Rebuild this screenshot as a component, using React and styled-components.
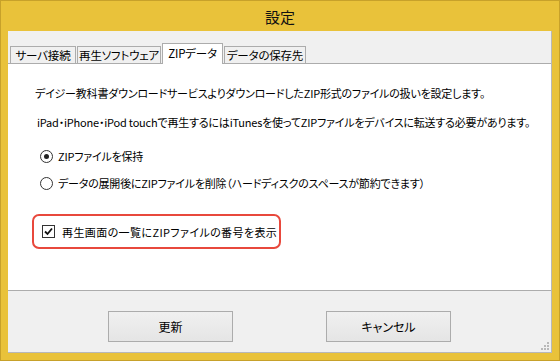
import styled, { createGlobalStyle } from "styled-components";

const GlobalStyle = createGlobalStyle`
  html, body {
    margin: 0;
    padding: 0;
    background: #ffffff;
  }
  body {
    font-family: "Noto Sans CJK JP", "Noto Sans", sans-serif;
    font-size: 11px;
    letter-spacing: -0.2px;
    color: #000000;
    font-feature-settings: "palt";
  }
`;

const tabs = [
  { label: "サーバ接続", width: 66 },
  { label: "再生ソフトウェア", width: 84 },
  { label: "ZIPデータ", width: 61, active: true },
  { label: "データの保存先", width: 82 },
];

export default function App() {
  return (
    <>
      <GlobalStyle />
      <Window>
        <TitleBar>設定</TitleBar>
        <Client>
          <TabStrip>
            {tabs.map((t) => (
              <Tab key={t.label} $active={t.active} $width={t.width}>
                {t.label}
              </Tab>
            ))}
          </TabStrip>
          <Panel>
            <Line>
              デイジー教科書ダウンロードサービスよりダウンロードしたZIP形式のファイルの扱いを設定します。
            </Line>
            <Line $indent={2} $gap={13}>
              iPad・iPhone・iPod touchで再生するにはiTunesを使ってZIPファイルをデバイスに転送する必要があります。
            </Line>
            <Options>
              <OptionRow>
                <Radio $checked />
                ZIPファイルを保持
              </OptionRow>
              <OptionRow>
                <Radio />
                データの展開後にZIPファイルを削除（ハードディスクのスペースが節約できます）
              </OptionRow>
            </Options>
            <Highlight>
              <CheckBox>
                <svg width="9" height="9" viewBox="0 0 9 9">
                  <path d="M1 4.5 L3.5 7 L8 1.5" fill="none" stroke="#111" strokeWidth="1.8" />
                </svg>
              </CheckBox>
              再生画面の一覧にZIPファイルの番号を表示
            </Highlight>
          </Panel>
          <Footer>
            <Button>更新</Button>
            <Button>キャンセル</Button>
          </Footer>
          <Grip width="8" height="8" viewBox="0 0 8 8">
            <rect x="6" y="0" width="2" height="2" />
            <rect x="3" y="3" width="2" height="2" />
            <rect x="6" y="3" width="2" height="2" />
            <rect x="0" y="6" width="2" height="2" />
            <rect x="3" y="6" width="2" height="2" />
            <rect x="6" y="6" width="2" height="2" />
          </Grip>
        </Client>
      </Window>
    </>
  );
}

const Window = styled.div`
  width: 560px;
  height: 361px;
  box-sizing: border-box;
  background: #e9c23a;
  border: 1px solid #c7a12a;
  padding: 0 7px 7px 7px;
  display: flex;
  flex-direction: column;
`;

const TitleBar = styled.div`
  height: 30px;
  flex: none;
  display: flex;
  align-items: center;
  justify-content: center;
  font-size: 15px;
  letter-spacing: 0;
  color: #111;
`;

const Client = styled.div`
  position: relative;
  flex: 1;
  background: #f0f0f0;
  border-right: 1px solid #b8b8b8;
  border-bottom: 1px solid #b8b8b8;
  display: flex;
  flex-direction: column;
  padding-top: 12px;
`;

const TabStrip = styled.div`
  position: relative;
  z-index: 1;
  height: 21px;
  margin-bottom: -1px;
  padding-left: 2px;
  display: flex;
  align-items: flex-end;
`;

const Tab = styled.div`
  box-sizing: border-box;
  width: ${(p) => p.$width}px;
  height: ${(p) => (p.$active ? 21 : 17)}px;
  margin-bottom: ${(p) => (p.$active ? 0 : 1)}px;
  margin-right: 1px;
  border: 1px solid #acacac;
  border-bottom: none;
  background: ${(p) => (p.$active ? "#ffffff" : "#f0f0f0")};
  display: flex;
  align-items: ${(p) => (p.$active ? "flex-start" : "center")};
  padding-top: ${(p) => (p.$active ? 1 : 0)}px;
  justify-content: center;
  white-space: nowrap;
  font-size: 11.5px;
  line-height: 16px;
`;

const Panel = styled.div`
  height: 228px;
  box-sizing: border-box;
  background: #ffffff;
  border-top: 1px solid #acacac;
  border-bottom: 1px solid #acacac;
  padding: 21px 0 0 27px;
`;

const Line = styled.div`
  line-height: 16px;
  white-space: nowrap;
  margin-left: ${(p) => p.$indent || 0}px;
  margin-top: ${(p) => p.$gap || 0}px;
`;

const Options = styled.div`
  margin: 18px 0 0 5px;
  display: flex;
  flex-direction: column;
  gap: 11px;
`;

const OptionRow = styled.div`
  display: flex;
  align-items: center;
  gap: 5px;
  line-height: 16px;
  white-space: nowrap;
`;

const Radio = styled.span`
  box-sizing: border-box;
  width: 13px;
  height: 13px;
  border-radius: 50%;
  border: 1px solid #333;
  background: #fff;
  display: inline-flex;
  align-items: center;
  justify-content: center;

  &::after {
    content: "";
    width: 5px;
    height: 5px;
    border-radius: 50%;
    background: ${(p) => (p.$checked ? "#222" : "transparent")};
  }
`;

const Highlight = styled.div`
  box-sizing: border-box;
  width: 249px;
  height: 35px;
  margin: 23px 0 0 -3px;
  border: 2px solid #e8483c;
  border-radius: 7px;
  display: flex;
  align-items: center;
  gap: 7px;
  padding-left: 8px;
  white-space: nowrap;
  letter-spacing: 0.4px;
`;

const CheckBox = styled.span`
  box-sizing: border-box;
  width: 13px;
  height: 13px;
  border: 1px solid #333;
  background: #fff;
  display: inline-flex;
  align-items: center;
  justify-content: center;
`;

const Footer = styled.div`
  flex: 1;
  display: flex;
  justify-content: center;
  align-items: flex-start;
  gap: 93px;
  padding-top: 20px;
`;

const Button = styled.button`
  box-sizing: border-box;
  width: 125px;
  height: 31px;
  border: 1px solid #acacac;
  background: linear-gradient(#f0f0f0, #e5e5e5);
  font-family: "Noto Sans CJK JP", "Noto Sans", sans-serif;
  font-size: 12px;
  font-feature-settings: "palt";
  color: #000;
  padding: 0;
`;

const Grip = styled.svg`
  position: absolute;
  right: 2px;
  bottom: 2px;
  fill: #b8b8b8;
`;
